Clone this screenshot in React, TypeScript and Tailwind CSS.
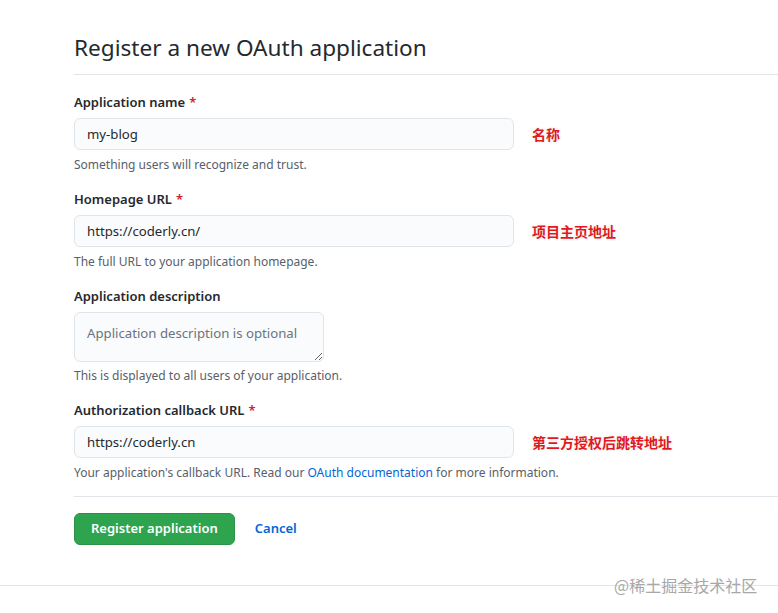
const font = "font-['Segoe_UI','Noto_Sans','Noto_Sans_CJK_SC',sans-serif]"

function Note({ text }: { text: string }) {
  return (
    <span className="ml-[18px] text-[14px] font-bold text-[#e0191f] font-['Noto_Sans_CJK_SC',sans-serif] [text-shadow:0_0_2px_#fff,0_0_3px_#ddd]">
      {text}
    </span>
  )
}

function Field({
  label,
  required,
  value,
  hint,
  note,
  last,
}: {
  label: string
  required?: boolean
  value: string
  hint: React.ReactNode
  note?: string
  last?: boolean
}) {
  return (
    <div className={last ? "mb-[14px]" : "mb-[15px]"}>
      <div className="text-[13px] leading-[20px] font-semibold text-[#24292e] mb-[6px]">
        {label}
        {required && <span className="text-[#cb2431] ml-[4px]">*</span>}
      </div>
      <div className="flex items-center">
        <input
          readOnly
          value={value}
          className="w-[440px] h-[32px] px-[12px] text-[13.2px] text-[#24292e] bg-[#fafbfc] border border-[#e1e4e8] rounded-[6px] outline-none"
        />
        {note && <Note text={note} />}
      </div>
      <div className="mt-[6px] text-[12px] leading-[18px] text-[#586069]">{hint}</div>
    </div>
  )
}

export default function App() {
  return (
    <div className={`${font} bg-white min-h-[613px] w-[778px] overflow-hidden relative`}>
      <div className="pl-[74px]">
        <div className="pt-[30px] pb-[8px] border-b border-[#e1e4e8]">
          <h2 className="text-[22.6px] leading-[36px] font-normal text-[#24292e]">
            Register a new OAuth application
          </h2>
        </div>

        <form className="pt-[17px]">
          <Field
            label="Application name"
            required
            value="my-blog"
            hint="Something users will recognize and trust."
            note="名称"
          />
          <Field
            label="Homepage URL"
            required
            value="https://coderly.cn/"
            hint="The full URL to your application homepage."
            note="项目主页地址"
          />

          <div className="mb-[15px]">
            <div className="text-[13px] leading-[20px] font-semibold text-[#24292e] mb-[6px]">
              Application description
            </div>
            <textarea
              readOnly
              placeholder="Application description is optional"
              className="block w-[250px] h-[50px] px-[12px] py-[10px] text-[13.2px] leading-[20px] text-[#24292e] placeholder:text-[#6a737d] bg-[#fafbfc] border border-[#e1e4e8] rounded-[6px] outline-none resize-y"
            />
            <div className="mt-[5px] text-[12px] leading-[18px] text-[#586069]">
              This is displayed to all users of your application.
            </div>
          </div>

          <Field
            label="Authorization callback URL"
            required
            value="https://coderly.cn"
            hint={
              <>
                Your application's callback URL. Read our{" "}
                <span className="text-[#0366d6]">OAuth documentation</span> for more information.
              </>
            }
            note="第三方授权后跳转地址"
            last
          />

          <div className="border-t border-[#e1e4e8] pt-[16px] flex items-center">
            <button
              type="button"
              className="h-[32px] px-[16px] rounded-[6px] bg-[#2ea44f] border border-[#2a9147] text-white text-[13px] font-semibold"
            >
              Register application
            </button>
            <span className="ml-[20px] text-[13px] font-semibold text-[#0366d6]">Cancel</span>
          </div>
        </form>
      </div>

      <div className="mt-[40px] border-t border-[#e1e4e8]" />

      <div className="absolute left-[614px] top-[574px] text-[16px] text-[#a8a8a8] font-['Noto_Sans_CJK_SC',sans-serif] leading-[22px]">
        @稀土掘金技术社区
      </div>
    </div>
  )
}
